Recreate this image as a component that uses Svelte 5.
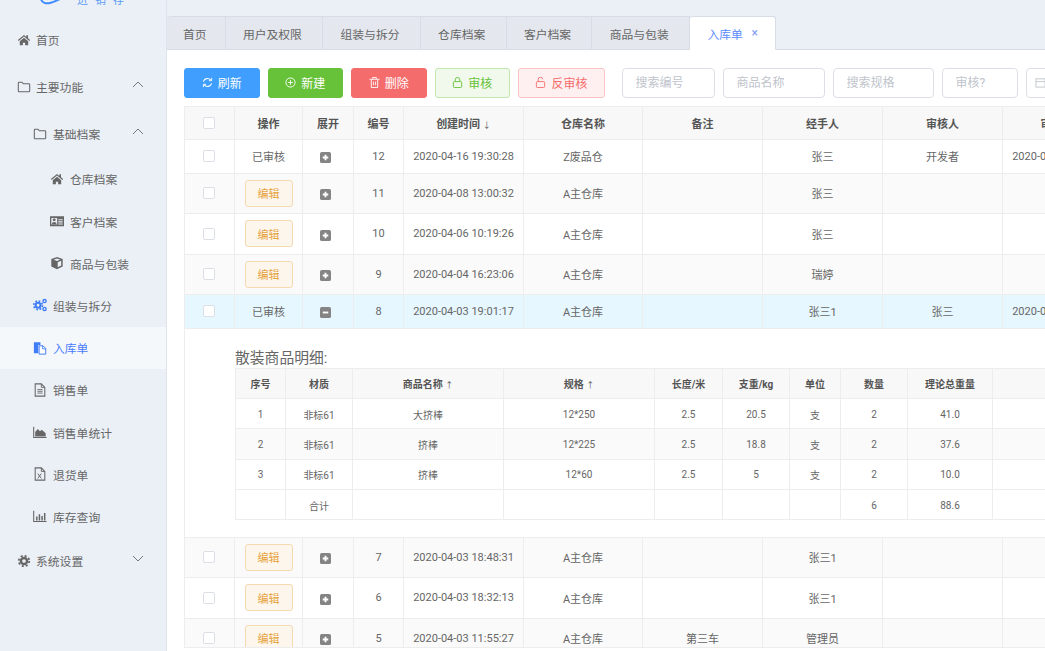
<script lang="ts">
  interface Row { id: number; time: string; wh: string; note?: string; by: string; audit?: string; auditTime?: string; done?: boolean; open?: boolean }

  const icons: Record<string, string> = {
    home: '<path d="M8 2.2 1 8.1l.9 1.1L8 4.1l6.1 5.1.9-1.1-2.4-2V2.6h-1.9v2L8 2.2zM3.2 9.5v4.6h3.500v-3h2.600v3h3.500V9.500L8 5.400 3.200 9.500z" fill="currentColor"/>',
    folder: '<path d="M1.500 12.500v-9a1 1 0 0 1 1-1h3.200l1.500 1.800h6.300a1 1 0 0 1 1 1v7.200a1 1 0 0 1-1 1h-11a1 1 0 0 1-1-1z" fill="none" stroke="currentColor" stroke-width="1.200"/>',
    card: '<path fill-rule="evenodd" d="M0 2.500h16v11.500H0V2.500zM1.500 4.500v7.500h6.700V4.500H1.500zm8 1.500v1.200h5V6h-5zm0 2.400v1.200h5V8.400h-5zm0 2.400V12h5v-1.200h-5zM4.800 5a1.700 1.700 0 1 1 0 3.400 1.700 1.700 0 0 1 0-3.400zM2.200 11.700c0-1.600 1.100-2.600 2.600-2.600s2.600 1 2.600 2.600H2.200z" fill="currentColor"/>',
    cube: '<path fill-rule="evenodd" d="M8 1 14.500 3.500v8.500L8 15 1.500 12V3.500L8 1zm0 1.800L4.200 4.200 8 5.700l3.800-1.500L8 2.800zM8.800 7v5.800l4-1.900V5.400L8.800 7z" fill="currentColor"/>',
    cogs: '<g fill="none" stroke="currentColor"><circle cx="5.800" cy="8.300" r="2.800" stroke-width="2.400"/><circle cx="5.800" cy="8.300" r="5" stroke-width="1.800" stroke-dasharray="2 1.930"/><circle cx="13.200" cy="3.500" r="1.800" stroke-width="1.600"/><circle cx="13.200" cy="12.500" r="1.800" stroke-width="1.600"/></g>',
    files: '<path d="M1 1.500h7.500v3H6v9.500H1V1.500z" fill="currentColor"/><path d="M7 5.500h4.500l3 3V15H7V5.500z" fill="#fff" stroke="currentColor" stroke-width="1.100"/><path d="M11 5.500v3.500h3.500" fill="none" stroke="currentColor"/>',
    doc: '<path d="M2.500 1h7l4 4v10h-11V1z" fill="none" stroke="currentColor" stroke-width="1.200"/><path d="M9.500 1v4h4M5 7.500h6M5 9.500h6M5 11.500h6" fill="none" stroke="currentColor"/>',
    area: '<path d="M.8 2v12.200h14.700" fill="none" stroke="currentColor" stroke-width="1.200"/><path d="M2.500 13V8l3-3.500 2.500 2.500 2-1.500 4.500 4V13z" fill="currentColor"/>',
    excel: '<path d="M2.500 1h7l4 4v10h-11V1z" fill="none" stroke="currentColor" stroke-width="1.200"/><path d="M9.500 1v4h4M5.500 7.500l4 5.500M9.500 7.500l-4 5.500" fill="none" stroke="currentColor" stroke-width="1.100"/>',
    bars: '<path d="M.8 2v12.200h14.700" fill="none" stroke="currentColor" stroke-width="1.200"/><path d="M3.500 8.500h1.700V13H3.500zM6.500 6h1.700v7H6.500zM9.500 8h1.700v5H9.500zM12.500 4.500h1.700V13h-1.700z" fill="currentColor"/>',
    gear: '<g fill="none" stroke="currentColor"><circle cx="8" cy="8" r="3.500" stroke-width="2.800"/><circle cx="8" cy="8" r="6" stroke-width="2" stroke-dasharray="2.400 2.312"/></g>',
  }

  const menu = [
    { label: '首页', icon: 'home', level: 0 },
    { label: '主要功能', icon: 'folder', level: 0, arrow: 'up' },
    { label: '基础档案', icon: 'folder', level: 1, arrow: 'up', tall: true },
    { label: '仓库档案', icon: 'home', level: 2 },
    { label: '客户档案', icon: 'card', level: 2 },
    { label: '商品与包装', icon: 'cube', level: 2 },
    { label: '组装与拆分', icon: 'cogs', level: 1, blue: true },
    { label: '入库单', icon: 'files', level: 1, active: true },
    { label: '销售单', icon: 'doc', level: 1 },
    { label: '销售单统计', icon: 'area', level: 1 },
    { label: '退货单', icon: 'excel', level: 1 },
    { label: '库存查询', icon: 'bars', level: 1 },
    { label: '系统设置', icon: 'gear', level: 0, arrow: 'down' },
  ]

  const tabs = ['首页', '用户及权限', '组装与拆分', '仓库档案', '客户档案', '商品与包装']

  const rows: Row[] = [
    { id: 12, time: '2020-04-16 19:30:28', wh: 'Z废品仓', by: '张三', audit: '开发者', auditTime: '2020-04-16 19:31:02', done: true },
    { id: 11, time: '2020-04-08 13:00:32', wh: 'A主仓库', by: '张三' },
    { id: 10, time: '2020-04-06 10:19:26', wh: 'A主仓库', by: '张三' },
    { id: 9, time: '2020-04-04 16:23:06', wh: 'A主仓库', by: '瑞婷' },
    { id: 8, time: '2020-04-03 19:01:17', wh: 'A主仓库', by: '张三1', audit: '张三', auditTime: '2020-04-03 19:20:41', done: true, open: true },
    { id: 7, time: '2020-04-03 18:48:31', wh: 'A主仓库', by: '张三1' },
    { id: 6, time: '2020-04-03 18:32:13', wh: 'A主仓库', by: '张三1' },
    { id: 5, time: '2020-04-03 11:55:27', wh: 'A主仓库', note: '第三车', by: '管理员' },
  ]

  const cols = [50, 68, 51, 50, 120, 119, 120, 120, 120, 120]
  const subCols = [50, 67, 151, 151, 68, 67, 51, 67, 85, 100]

  const details = [
    ['1', '非标61', '大挤棒', '12*250', '2.5', '20.5', '支', '2', '41.0', ''],
    ['2', '非标61', '挤棒', '12*225', '2.5', '18.8', '支', '2', '37.6', ''],
    ['3', '非标61', '挤棒', '12*60', '2.5', '5', '支', '2', '10.0', ''],
    ['', '合计', '', '', '', '', '', '6', '88.6', ''],
  ]
</script>

<div class="layout">
  <aside class="sidebar">
    <div class="logo">
      <svg class="logo-mark" viewBox="0 0 22 6" width="22" height="6"><path d="M1 0c1 4 5 5 9 4s6-2 10-4" fill="none" stroke="#3f8cff" stroke-width="2"/></svg>
      <span class="logo-text">进销存</span>
    </div>
    {#each menu as item}
      <div class="menu-item level-{item.level}" class:active={item.active} class:tall={item.tall} class:blue={item.blue}>
        <svg class="menu-icon" viewBox="0 0 16 16" width="14" height="14">{@html icons[item.icon]}</svg>
        <span>{item.label}</span>
        {#if item.arrow}
          <svg class="arrow" viewBox="0 0 12 7" width="12" height="7">
            <path d={item.arrow === 'up' ? 'M1 6l5-5 5 5' : 'M1 1l5 5 5-5'} fill="none" stroke="currentColor" stroke-width="1"/>
          </svg>
        {/if}
      </div>
    {/each}
  </aside>

  <main class="main">
    <nav class="tabs">
      {#each tabs as tab}
        <div class="tab">{tab}</div>
      {/each}
      <div class="tab current">入库单<span class="close">×</span></div>
    </nav>

    <div class="content">
      <div class="toolbar">
        <button class="btn primary">
          <svg viewBox="0 0 12 12" width="11" height="11"><path d="M1.500 5a4.600 4.600 0 0 1 8-1.600M10.500 7a4.600 4.600 0 0 1-8 1.600" fill="none" stroke="currentColor" stroke-width="1.200"/><path d="M10.500 1v3H7.500M1.500 11V8h3" fill="none" stroke="currentColor"/></svg>刷新
        </button>
        <button class="btn success">
          <svg viewBox="0 0 12 12" width="11" height="11"><circle cx="6" cy="6" r="5" fill="none" stroke="currentColor"/><path d="M3.500 6h5M6 3.500v5" stroke="currentColor"/></svg>新建
        </button>
        <button class="btn danger">
          <svg viewBox="0 0 12 12" width="11" height="11"><path d="M2.500 3v8.500h7V3M.5 2.500h11M4 2V.5h4V2M4.800 5v4M7.200 5v4" fill="none" stroke="currentColor"/></svg>删除
        </button>
        <button class="btn plain-success">
          <svg viewBox="0 0 12 12" width="11" height="11"><rect x="1.500" y="5" width="9" height="6.500" rx="1" fill="none" stroke="currentColor"/><path d="M3.500 5V3a2.500 2.500 0 0 1 5 0v2" fill="none" stroke="currentColor"/></svg>审核
        </button>
        <button class="btn plain-danger wide">
          <svg viewBox="0 0 12 12" width="11" height="11"><rect x="1.500" y="5" width="9" height="6.500" rx="1" fill="none" stroke="currentColor"/><path d="M3.500 5V3a2.500 2.500 0 0 1 5-.5" fill="none" stroke="currentColor"/></svg>反审核
        </button>
        <input class="search s1" placeholder="搜索编号" />
        <input class="search s2" placeholder="商品名称" />
        <input class="search s3" placeholder="搜索规格" />
        <input class="search s4" placeholder="审核?" />
        <div class="date">
          <svg viewBox="0 0 12 12" width="11" height="11"><rect x="1" y="2" width="10" height="9" fill="none" stroke="#c0c4cc"/><path d="M1 5h10" stroke="#c0c4cc"/></svg>
        </div>
      </div>

      <div class="table-wrap">
        <table class="grid">
          <colgroup>{#each cols as w}<col style="width:{w}px" />{/each}</colgroup>
          <thead>
            <tr>
              <th><span class="check"></span></th>
              <th>操作</th>
              <th>展开</th>
              <th>编号</th>
              <th>创建时间 <span class="sort">↓</span></th>
              <th>仓库名称</th>
              <th>备注</th>
              <th>经手人</th>
              <th>审核人</th>
              <th>审核时间</th>
            </tr>
          </thead>
          <tbody>
            {#each rows as row, i}
              <tr class:stripe={i % 2 === 1} class:current-row={row.open} class:low={row.done}>
                <td><span class="check"></span></td>
                <td>
                  {#if row.done}已审核{:else}<button class="edit">编辑</button>{/if}
                </td>
                <td>
                  <svg class="toggle" viewBox="0 0 12 12" width="11" height="11">
                    <rect width="12" height="12" rx="2" fill="#848484"/>
                    <path d={row.open ? 'M3 6h6' : 'M3 6h6M6 3v6'} stroke="#fff" stroke-width="2"/>
                  </svg>
                </td>
                <td>{row.id}</td>
                <td>{row.time}</td>
                <td>{row.wh}</td>
                <td>{row.note ?? ''}</td>
                <td>{row.by}</td>
                <td>{row.audit ?? ''}</td>
                <td>{row.auditTime ?? ''}</td>
              </tr>
              {#if row.open}
                <tr class="expanded">
                  <td colspan="10">
                    <h4>散装商品明细:</h4>
                    <table class="sub">
                      <colgroup>{#each subCols as w}<col style="width:{w}px" />{/each}</colgroup>
                      <thead>
                        <tr>
                          <th>序号</th><th>材质</th><th>商品名称 <span class="sort">↑</span></th><th>规格 <span class="sort">↑</span></th><th>长度/米</th>
                          <th>支重/kg</th><th>单位</th><th>数量</th><th>理论总重量</th><th></th>
                        </tr>
                      </thead>
                      <tbody>
                        {#each details as d, j}
                          <tr class:stripe={j === 1}>
                            {#each d as cell}<td>{cell}</td>{/each}
                          </tr>
                        {/each}
                      </tbody>
                    </table>
                  </td>
                </tr>
              {/if}
            {/each}
          </tbody>
        </table>
      </div>
    </div>
  </main>
</div>

<style>
  :global(body) { margin: 0; overflow: hidden; }
  .layout {
    display: flex; width: 1045px; height: 651px; overflow: hidden;
    font-family: Roboto, "Noto Sans CJK SC", sans-serif;
    font-size: 11px; color: #666;
    background: #ebf0f7;
  }
  .sidebar {
    width: 166px; flex-shrink: 0;
    border-right: 1px solid #dfe4ec;
  }
  .logo { height: 16px; position: relative; overflow: hidden; display: flex; gap: 15px; padding-left: 40px; }
  .logo-mark { margin-top: -1px; }
  .logo-text { color: #5b9bf5; font-size: 11px; line-height: 11px; margin-top: -5px; letter-spacing: 7px; white-space: nowrap; }
  .menu-item {
    height: 47px; display: flex; align-items: center;
    font-size: 11.800px; color: #666; position: relative;
  }
  .menu-item svg.menu-icon { color: #666; flex-shrink: 0; margin-right: 5px; }
  .level-0 { padding-left: 17px; }
  .level-1 { padding-left: 33px; height: 42.200px; }
  .level-1.tall { height: 47.800px; }
  .level-2 { padding-left: 50px; height: 42.200px; }
  .level-1 svg.menu-icon, .level-2 svg.menu-icon { margin-right: 6px; }
  .blue svg.menu-icon { color: #3f7cf5; }
  .active { background: #f5f8fb; color: #4a7dff; }
  .active svg.menu-icon { color: #3f7cf5; }
  .arrow { position: absolute; left: 132px; top: 50%; margin-top: -6px; color: #777; }

  .main { flex: 1; min-width: 0; display: flex; flex-direction: column; padding-top: 16px; }
  .tabs {
    display: flex; height: 34px; box-sizing: border-box;
    border-bottom: 1px solid #d8dce5;
  }
  .tab {
    box-sizing: border-box; height: 34px; padding: 0 20.300px 0 17.300px;
    display: flex; align-items: center; flex-shrink: 0;
    font-size: 11.800px; color: #666;
    background: #e4e8ee;
    border: 1px solid #d8dce5; border-left: 0;
  }
  .tab:first-child { border-top-left-radius: 4px; padding: 0 18px 0 16px; }
  .tab.current {
    background: #fff; color: #5b8cff; border-radius: 3px 3px 0 0;
    border-bottom-color: #fff; padding: 0 0 0 17.500px; width: 86px;
  }
  .close { margin-left: 8.500px; font-size: 12px; color: #7d9cf5; }

  .content { flex: 1; min-height: 0; background: #fff; padding: 17px 0 3px 17px; display: flex; flex-direction: column; }
  .toolbar { display: flex; align-items: center; height: 31px; margin-bottom: 8px; overflow: hidden; }
  .btn {
    box-sizing: border-box; width: 75.500px; height: 30px; margin-right: 8px; flex-shrink: 0;
    display: flex; align-items: center; justify-content: center; gap: 5px;
    font: inherit; font-size: 12px; border-radius: 3px; border: 1px solid;
  }
  .btn.wide { width: 87px; margin-right: 17px; }
  .primary { background: #409eff; border-color: #409eff; color: #fff; }
  .success { background: #67c23a; border-color: #67c23a; color: #fff; }
  .danger { background: #f56c6c; border-color: #f56c6c; color: #fff; }
  .plain-success { background: #f0f9eb; border-color: #c2e7b0; color: #67c23a; }
  .plain-danger { background: #fef0f0; border-color: #fbc4c4; color: #f56c6c; }
  .search {
    box-sizing: border-box; height: 30px; margin-right: 8px; padding: 0 12.500px;
    border: 1px solid #dcdfe6; border-radius: 4px; outline: 0;
    font: inherit; font-size: 12px; background: #fff; flex-shrink: 0;
  }
  .search::placeholder { color: #c0c4cc; }
  .s1 { width: 93px; }
  .s2 { width: 102px; }
  .s3 { width: 101px; }
  .s4 { width: 76px; }
  .date {
    box-sizing: border-box; width: 40px; height: 30px; flex-shrink: 0;
    border: 1px solid #dcdfe6; border-radius: 4px 0 0 4px; padding: 8px 0 0 8px;
  }

  .table-wrap { flex: 1; min-height: 0; overflow: hidden; border-bottom: 1px solid #ededed; }
  table { border-collapse: collapse; table-layout: fixed; }
  .grid { width: 938px; }
  .grid > thead > tr > th, .grid > tbody > tr > td {
    border: 1px solid #ededed; padding: 0; text-align: center; box-sizing: border-box; white-space: nowrap; overflow: hidden;
  }
  .grid > thead > tr > th { height: 33px; background: #f8f8f8; font-weight: 700; color: #555; }
  .grid > tbody > tr > td { height: 40.500px; }
  .grid > tbody > tr.low > td { height: 33.500px; }
  .stripe > td { background: #fafafa; }
  .current-row > td { background: #e6f7ff; }
  .sort { font-size: 8px; font-weight: 400; }
  .check {
    display: inline-block; box-sizing: border-box; width: 12px; height: 12px; margin-right: 1px;
    border: 1px solid #dcdfe6; border-radius: 2px; background: #fff; vertical-align: middle; margin-top: -1px;
  }
  .edit {
    box-sizing: border-box; width: 48px; height: 27px; padding: 0;
    font: inherit; color: #e6a23c; background: #fdf6ec;
    border: 1px solid #f5dab1; border-radius: 3px;
  }
  .toggle { vertical-align: middle; margin-right: 5px; margin-top: 2px; }

  .grid > tbody > tr.expanded > td { height: 209px; text-align: left; vertical-align: top; background: #fff; padding: 19px 0 0 50px; }
  h4 { margin: 0; height: 20px; line-height: 20px; font-size: 14.800px; font-weight: 400; color: #666; }
  .sub { width: 856px; font-size: 10px; }
  .sub th, .sub td { border: 1px solid #ededed; height: 30.400px; padding: 0; text-align: center; box-sizing: border-box; }
  .sub td { padding-top: 1px; }
  .sub th { background: #f8f8f8; font-weight: 700; color: #555; }
</style>
